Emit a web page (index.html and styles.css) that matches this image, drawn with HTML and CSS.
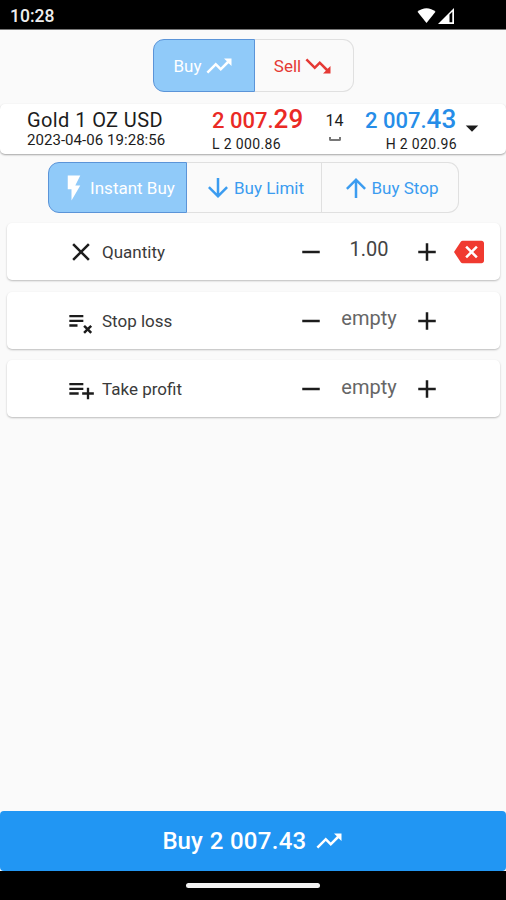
FILE: index.html
```
<!DOCTYPE html>
<html lang="en">
<head>
    <meta charset="UTF-8">
    <meta name="viewport" content="width=device-width, initial-scale=1.0">
    <link rel="stylesheet" href="styles.css">
    <title>New Order</title>
</head>
<body>

    <!-- Status bar -->
    <header class="status-bar">
        <span class="clock">10:28</span>
        <svg class="wifi" viewBox="0 0 20 17"><path d="M10 16.500L.5 4.500C6-.5 14-.5 19.500 4.500z"/></svg>
        <svg class="signal" viewBox="0 0 16 16"><path fill-rule="evenodd" d="M0 16L16 0v16zM11.500 6.500v7.800h2.800V3.800z"/></svg>
    </header>

    <main class="order">
        <div class="toggle side-toggle">
            <button class="option active">
                <span>Buy</span>
                <svg class="icon" viewBox="0 0 24 24"><path d="M16 6l2.290 2.290-4.880 4.880-4-4L2 16.590 3.410 18l6-6 4 4 6.300-6.290L22 12V6z"/></svg>
            </button>
            <button class="option sell">
                <span>Sell</span>
                <svg class="icon" viewBox="0 0 24 24"><path d="M16 18l2.290-2.290-4.880-4.880-4 4L2 7.410 3.410 6l6 6 4-4 6.300 6.290L22 12v6z"/></svg>
            </button>
        </div>

        <section class="quote">
            <div class="instrument">
                <div class="name">Gold 1 OZ USD</div>
                <div class="time">2023-04-06 19:28:56</div>
            </div>
            <div class="price bid">
                <div class="value">2 007.<b>29</b></div>
                <div class="range">L 2 000.86</div>
            </div>
            <div class="spread">
                <span>14</span>
                <i class="bracket"></i>
            </div>
            <div class="price ask">
                <div class="value">2 007.<b>43</b></div>
                <div class="range">H 2 020.96</div>
            </div>
            <svg class="icon caret" viewBox="0 0 24 24"><path d="M7 10l5 5 5-5z"/></svg>
        </section>

        <div class="toggle type-toggle">
            <button class="option active">
                <svg class="icon" viewBox="0 0 24 24"><path d="M7 2v11h3v9l7-12h-4l4-8z"/></svg>
                <span>Instant Buy</span>
            </button>
            <button class="option">
                <svg class="icon" viewBox="0 0 24 24"><path d="M20 12l-1.410-1.410L13 16.170V4h-2v12.170l-5.580-5.590L4 12l8 8 8-8z"/></svg>
                <span>Buy Limit</span>
            </button>
            <button class="option">
                <svg class="icon" viewBox="0 0 24 24"><path d="M4 12l1.410 1.410L11 7.830V20h2V7.830l5.580 5.590L20 12l-8-8-8 8z"/></svg>
                <span>Buy Stop</span>
            </button>
        </div>

        <div class="fields">
            <div class="card">
                <svg class="icon" viewBox="0 0 24 24"><path d="M19 6.410L17.590 5 12 10.590 6.410 5 5 6.410 10.590 12 5 17.590 6.410 19 12 13.410 17.590 19 19 17.590 13.410 12z"/></svg>
                <span class="label">Quantity</span>
                <svg class="icon" viewBox="0 0 24 24"><path d="M19 13H5v-2h14z"/></svg>
                <span class="amount number">1.00</span>
                <svg class="icon" viewBox="0 0 24 24"><path d="M19 13h-6v6h-2v-6H5v-2h6V5h2v6h6z"/></svg>
                <svg class="icon clear" viewBox="0 0 24 24"><path d="M22 3H7c-.69 0-1.230.35-1.590.88L0 12l5.410 8.110c.36.53.9.89 1.590.89h15c1.100 0 2-.9 2-2V5c0-1.100-.9-2-2-2zm-3 12.590L17.590 17 14 13.410 10.410 17 9 15.590 12.590 12 9 8.410 10.410 7 14 10.590 17.590 7 19 8.410 15.410 12 19 15.590z"/></svg>
            </div>
            <div class="card">
                <svg class="icon list" viewBox="0 0 24 24"><path d="M2 6h12v2H2zM2 10h12v2H2zM2 14h7v2H2zM21.500 16l-1.500-1.500-2.300 2.300-2.300-2.300-1.500 1.500 2.300 2.300-2.300 2.300 1.500 1.500 2.300-2.300 2.300 2.300 1.500-1.500-2.300-2.300z"/></svg>
                <span class="label">Stop loss</span>
                <svg class="icon" viewBox="0 0 24 24"><path d="M19 13H5v-2h14z"/></svg>
                <span class="amount">empty</span>
                <svg class="icon" viewBox="0 0 24 24"><path d="M19 13h-6v6h-2v-6H5v-2h6V5h2v6h6z"/></svg>
            </div>
            <div class="card">
                <svg class="icon list" viewBox="0 0 24 24"><path d="M14 10H2v2h12zM14 6H2v2h12zM19 14v-4h-2v4h-4v2h4v4h2v-4h4v-2zM2 14h8v2H2z"/></svg>
                <span class="label">Take profit</span>
                <svg class="icon" viewBox="0 0 24 24"><path d="M19 13H5v-2h14z"/></svg>
                <span class="amount">empty</span>
                <svg class="icon" viewBox="0 0 24 24"><path d="M19 13h-6v6h-2v-6H5v-2h6V5h2v6h6z"/></svg>
            </div>
        </div>
    </main>

    <button class="submit">
        <span>Buy</span><span class="submit-price">2 007.43</span>
        <svg class="icon" viewBox="0 0 24 24"><path d="M16 6l2.290 2.290-4.880 4.880-4-4L2 16.590 3.410 18l6-6 4 4 6.300-6.290L22 12V6z"/></svg>
    </button>

    <footer class="nav-bar"><div class="handle"></div></footer>

</body>
</html>
```
FILE: styles.css
```
* {
    box-sizing: border-box;
}

body {
    margin: 0;
    height: 900px;
    display: flex;
    flex-direction: column;
    font-family: Roboto, sans-serif;
    background-color: #fafafa;
    color: #1c1c1c;
    overflow: hidden;
}

button {
    font-family: inherit;
    border: none;
    margin: 0;
    padding: 0;
}

.icon {
    width: 30px;
    height: 30px;
    flex: none;
    fill: currentColor;
}

/* Status bar */
.status-bar {
    height: 30px;
    background-color: #000;
    border-bottom: 1px solid #777;
    display: flex;
    align-items: center;
    color: #eee;
    padding: 2px 52px 0 10px;
}

.clock {
    flex: 1;
    font-size: 17.5px;
    font-weight: 500;
}

.wifi {
    width: 19px;
    height: 17px;
    fill: #fff;
}

.signal {
    width: 16px;
    height: 16px;
    margin-left: 2px;
    fill: #fff;
}

.order {
    flex: 1;
    padding-top: 9px;
}

/* Toggle groups */
.toggle {
    display: flex;
    height: 53px;
    margin: 0 auto;
}

.option {
    display: flex;
    align-items: center;
    justify-content: center;
    background-color: #fafafa;
    border: 1px solid #e0e0e0;
    border-left: none;
    color: #3b9cf0;
    font-size: 17px;
    white-space: nowrap;
}

.option:last-child {
    border-radius: 0 11px 11px 0;
}

.option.active {
    background-color: #90caf9;
    border: 1px solid #5b94d8;
    border-radius: 11px 0 0 11px;
    color: #fff;
}

.side-toggle {
    width: 201px;
}

.side-toggle .option {
    width: 99px;
    gap: 2px;
}

.side-toggle .active {
    width: 102px;
}

.option.sell {
    color: #e53935;
}

.type-toggle {
    width: 411px;
    height: 51px;
    margin-top: 8px;
}

.type-toggle .option {
    width: 135px;
    gap: 1px;
}

.type-toggle .active {
    width: 139px;
}

.type-toggle .option:last-child {
    width: 137px;
}

/* Quote */
.quote {
    height: 50px;
    margin-top: 12px;
    background-color: #fff;
    border-radius: 5px;
    box-shadow: 0 1px 2px rgba(0, 0, 0, 0.35);
    display: grid;
    grid-template-columns: 185px 92px 61px 92px 30px;
    padding-left: 27px;
    white-space: nowrap;
}

.name {
    font-size: 20px;
    line-height: 24px;
    letter-spacing: 0.4px;
    margin-top: 4px;
}

.time {
    font-size: 15px;
    line-height: 17px;
    letter-spacing: 0.05px;
}

.value {
    font-size: 22px;
    font-weight: 500;
    line-height: 30px;
}

.value b {
    font-size: 26px;
    font-weight: 500;
}

.range {
    font-size: 14px;
    line-height: 18px;
    letter-spacing: 0.35px;
    margin-top: -1px;
}

.bid .value {
    color: #ea2a25;
}

.ask .value {
    color: #268de8;
}

.ask .range {
    text-align: right;
}

.spread {
    display: flex;
    flex-direction: column;
    align-items: center;
    font-size: 16px;
    line-height: 20px;
    padding-top: 7px;
}

.bracket {
    width: 12px;
    height: 4px;
    margin-top: 6px;
    border: 2px solid #777;
    border-top: none;
    border-radius: 0 0 2px 2px;
}

.caret {
    margin-top: 9px;
}

/* Order fields */
.fields {
    display: flex;
    flex-direction: column;
    gap: 11.5px;
    padding: 10px 6px 0 7px;
}

.card {
    height: 57px;
    background-color: #fff;
    border-radius: 5px;
    box-shadow: 0 1px 2px rgba(0, 0, 0, 0.25);
    display: grid;
    grid-template-columns: 36px 194px 30px 86px 30px 30px;
    align-items: center;
    padding-left: 59px;
}

.card + .card {
    padding-top: 1px;
}

.label {
    font-size: 17px;
    color: #3a3a3a;
}

.list {
    width: 28px;
    height: 28px;
    margin: 2px 0 0 1px;
}

.amount {
    font-size: 20px;
    color: #666;
    text-align: center;
    padding-bottom: 5px;
}

.number {
    color: #444;
}

.clear {
    color: #f03a30;
    margin-left: 12px;
}

/* Submit */
.submit {
    height: 60px;
    background-color: #2196f3;
    border-radius: 4px;
    color: #fff;
    display: flex;
    align-items: center;
    justify-content: center;
    font-size: 24px;
    font-weight: 500;
}

.submit-price {
    margin: 0 7px;
    letter-spacing: 0.3px;
}

/* Navigation bar */
.nav-bar {
    height: 29px;
    background-color: #000;
    display: flex;
    justify-content: center;
    padding-top: 12px;
}

.handle {
    width: 134px;
    height: 5px;
    border-radius: 3px;
    background-color: #f2f2f2;
}
```
